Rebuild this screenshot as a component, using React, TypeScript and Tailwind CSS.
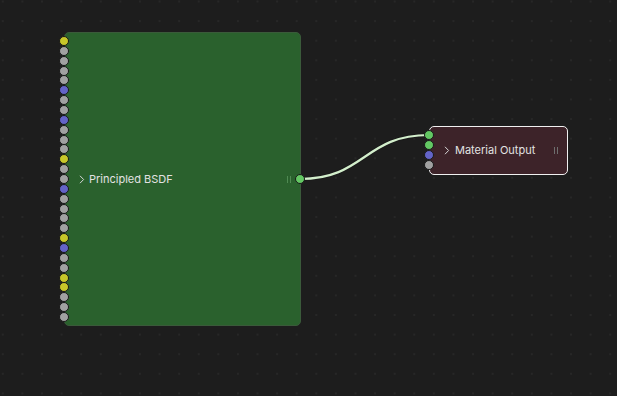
import React from "react";

type SocketKind = "y" | "g" | "b" | "n";

const socketColor: Record<SocketKind, string> = {
  y: "bg-[#c7c729]",
  g: "bg-[#a1a1a1]",
  b: "bg-[#6363c7]",
  n: "bg-[#63c763]",
};

// input sockets of the Principled BSDF, top to bottom
const bsdfInputs: SocketKind[] = [
  "y", "g", "g", "g", "g", "b", "g", "g", "b", "g",
  "g", "g", "y", "g", "g", "b", "g", "g", "g", "g",
  "y", "b", "g", "g", "y", "y", "g", "g", "g",
];

const outputInputs: SocketKind[] = ["n", "n", "b", "g"];

const Socket = ({ kind }: { kind: SocketKind }) => (
  <div className="h-[9.86px] flex items-center justify-center">
    <div className={`w-[10px] h-[10px] shrink-0 rounded-full border border-[#181818] ${socketColor[kind]}`} />
  </div>
);

const Chevron = () => (
  <svg width="6" height="9" viewBox="0 0 6 9" className="shrink-0">
    <path d="M1 0.8 L4.6 4.5 L1 8.2" fill="none" stroke="#d8d8d8" strokeWidth="1" />
  </svg>
);

const Grip = ({ color }: { color: string }) => (
  <div className="flex gap-[2px]">
    <div className={`w-[1px] h-[7px] ${color}`} />
    <div className={`w-[1px] h-[7px] ${color}`} />
  </div>
);

export default function App() {
  return (
    <div
      className="relative w-[617px] h-[396px] overflow-hidden bg-[#1d1d1d] bg-[radial-gradient(circle,#272727_0.8px,transparent_1.1px)] bg-[length:19.6px_19.6px] bg-[position:12.6px_11.3px]"
      style={{ fontFamily: "Inter, 'Noto Sans', sans-serif" }}
    >
      {/* noodle */}
      <svg className="absolute inset-0" width="617" height="396">
        <path d="M300 179 C 365 179, 364 135, 429 135" fill="none" stroke="#1a1a1a" strokeWidth="4" />
        <path d="M300 179 C 365 179, 364 135, 429 135" fill="none" stroke="#d3efcc" strokeWidth="2.2" />
      </svg>

      {/* Principled BSDF */}
      <div className="absolute left-[64px] top-[32px] w-[237px] h-[294px] rounded-[5px] bg-[#2a612d] border border-[#3a5a3a] flex items-center pl-[14px] pr-[9px]">
        <Chevron />
        <span className="ml-[4px] text-[11px] text-[#e2e2e2] leading-none">Principled BSDF</span>
        <div className="ml-auto">
          <Grip color="bg-[#4f8a52]" />
        </div>
      </div>
      <div className="absolute left-[59px] top-[36px] w-[10px] flex flex-col">
        {bsdfInputs.map((k, i) => (
          <Socket key={i} kind={k} />
        ))}
      </div>
      <div className="absolute left-[295px] top-[174px] w-[10px]">
        <Socket kind="n" />
      </div>

      {/* Material Output */}
      <div className="absolute left-[429px] top-[126px] w-[139px] h-[49px] rounded-[5px] bg-[#3d2329] border border-[#f0f0f0] flex items-center pl-[14px] pr-[9px]">
        <Chevron />
        <span className="ml-[5px] text-[11px] text-[#e2e2e2] leading-none">Material Output</span>
        <div className="ml-auto">
          <Grip color="bg-[#6e6e6e]" />
        </div>
      </div>
      <div className="absolute left-[424px] top-[130.5px] w-[10px] flex flex-col">
        {outputInputs.map((k, i) => (
          <Socket key={i} kind={k} />
        ))}
      </div>
    </div>
  );
}
